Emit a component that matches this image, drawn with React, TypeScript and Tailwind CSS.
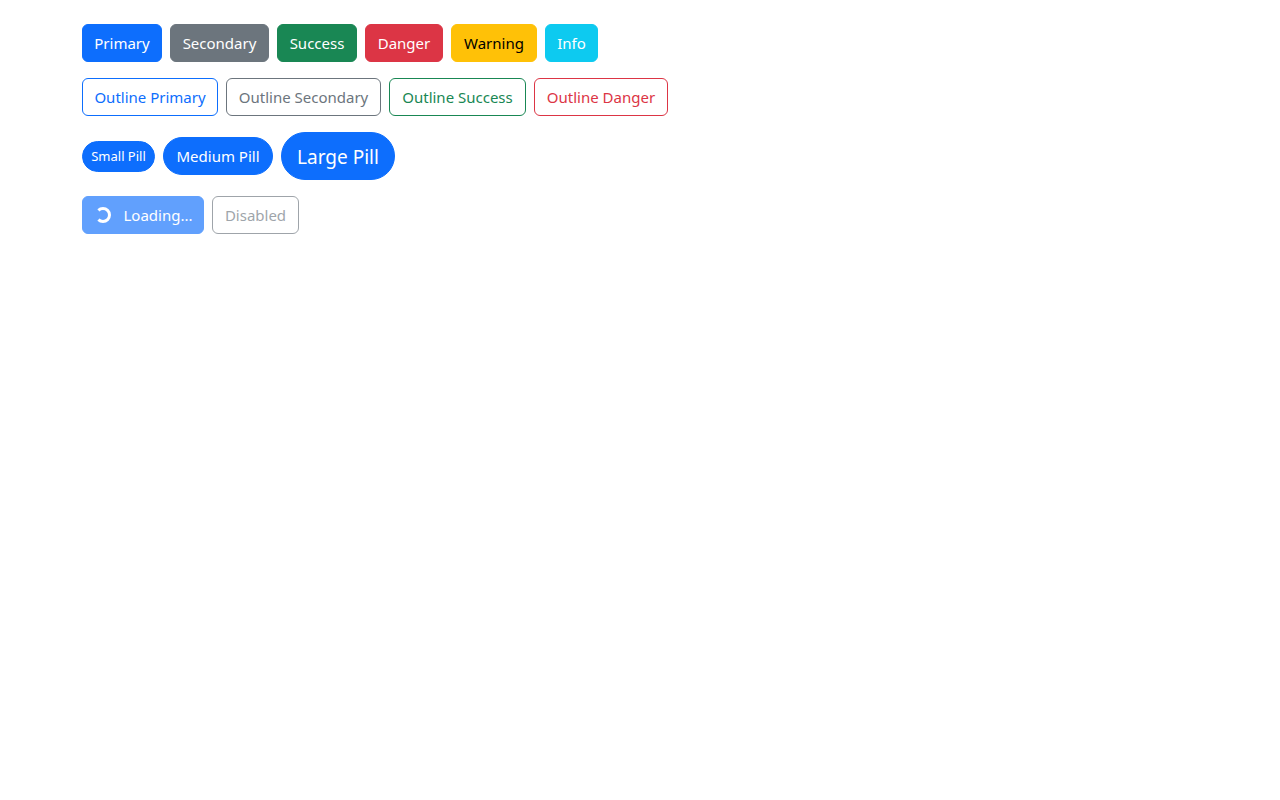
import clsx from 'clsx';

const solidButtons = [
  { label: 'Primary', className: 'w-20 border-[#0d6efd] bg-[#0d6efd] text-white' },
  { label: 'Secondary', className: 'w-[99px] border-[#6c757d] bg-[#6c757d] text-white' },
  { label: 'Success', className: 'w-20 border-[#198754] bg-[#198754] text-white' },
  { label: 'Danger', className: 'w-[78px] border-[#dc3545] bg-[#dc3545] text-white' },
  { label: 'Warning', className: 'w-[86px] border-[#ffc107] bg-[#ffc107] text-black' },
  { label: 'Info', className: 'w-[53px] border-[#0dcaf0] bg-[#0dcaf0] text-white' },
];

const outlineButtons = [
  { label: 'Outline Primary', className: 'w-[136px] border-[#0d6efd] text-[#0d6efd]' },
  { label: 'Outline Secondary', className: 'w-[155px] border-[#6c757d] text-[#6c757d]' },
  { label: 'Outline Success', className: 'w-[137px] border-[#198754] text-[#198754]' },
  { label: 'Outline Danger', className: 'w-[134px] border-[#dc3545] text-[#dc3545]' },
];

const base = 'flex items-center justify-center whitespace-nowrap border';
const medium = 'h-[38px] rounded-md text-[15px]';
const pill = 'rounded-full border-[#0d6efd] bg-[#0d6efd] text-white';

export default function App() {
  return (
    <main className="mx-auto flex max-w-[1140px] flex-col gap-4 px-3 py-6 font-['Noto_Sans',sans-serif]">
      <div className="flex flex-wrap gap-2">
        {solidButtons.map(({ label, className }) => (
          <button key={label} type="button" className={clsx(base, medium, className)}>
            {label}
          </button>
        ))}
      </div>

      <div className="flex flex-wrap gap-2">
        {outlineButtons.map(({ label, className }) => (
          <button key={label} type="button" className={clsx(base, medium, className)}>
            {label}
          </button>
        ))}
      </div>

      <div className="flex flex-wrap items-center gap-2">
        <button type="button" className={clsx(base, pill, 'h-[31px] w-[73px] pt-0.5 text-[13px]')}>
          Small Pill
        </button>
        <button type="button" className={clsx(base, pill, 'h-[38px] w-[110px] text-[15px]')}>
          Medium Pill
        </button>
        <button type="button" className={clsx(base, pill, 'h-12 w-[114px] pt-0.5 text-[19px]')}>
          Large Pill
        </button>
      </div>

      <div className="flex flex-wrap gap-2">
        <button type="button" disabled className={clsx(base, medium, 'w-[122px] gap-3 border-[#0d6efd] bg-[#0d6efd] pl-0.5 text-white opacity-65')}>
          <svg className="size-4" viewBox="0 0 16 16" fill="none" aria-hidden="true">
            <path d="M3.4 3.4A6.5 6.5 0 1 1 3.4 12.6" stroke="currentColor" strokeWidth="3" />
          </svg>
          Loading...
        </button>
        <button type="button" disabled className={clsx(base, medium, 'w-[87px] border-[#6c757d] text-[#6c757d] opacity-65')}>
          Disabled
        </button>
      </div>
    </main>
  );
}
